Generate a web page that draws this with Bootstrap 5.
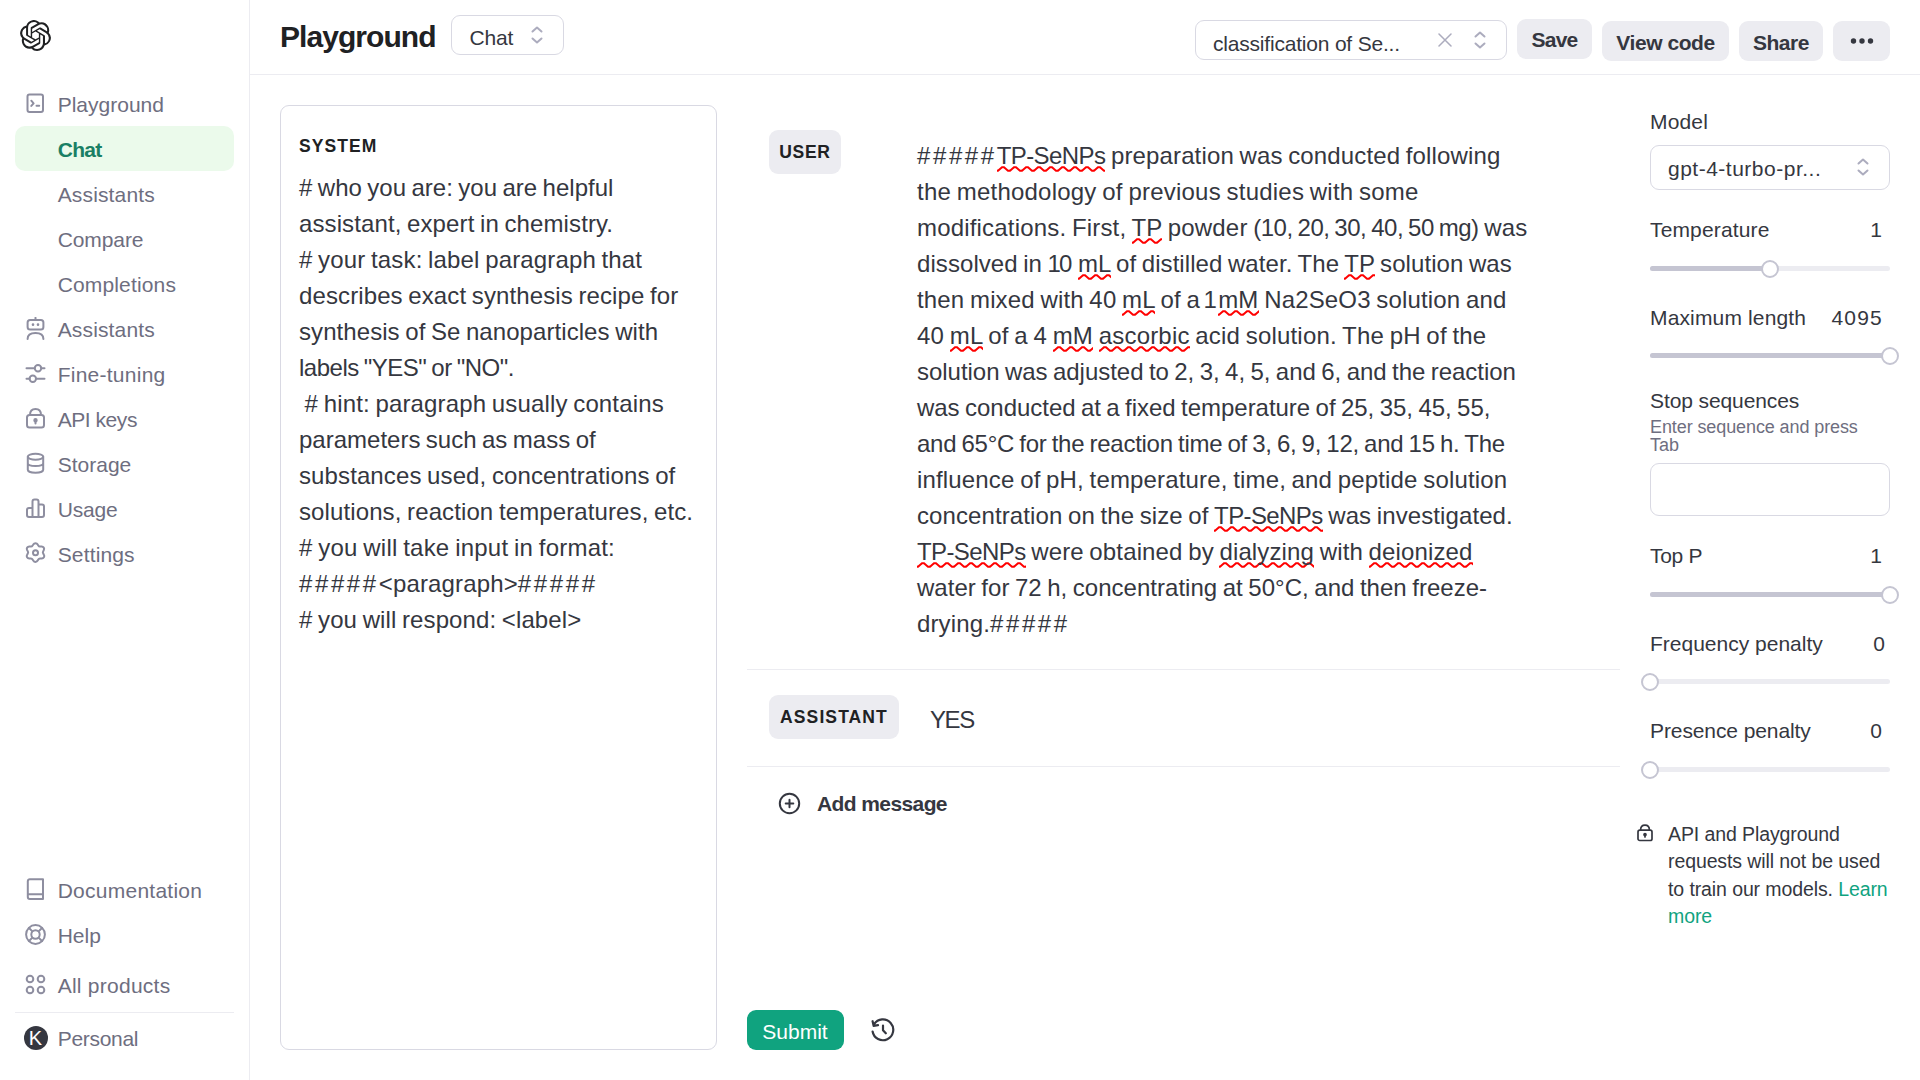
<!DOCTYPE html>
<html lang="en">
<head>
<meta charset="utf-8">
<title>Playground</title>
<link href="https://cdn.jsdelivr.net/npm/bootstrap@5.3.0/dist/css/bootstrap.min.css" rel="stylesheet">
<style>
body{font-family:"Liberation Sans",Arial,sans-serif;font-size:21px;line-height:30px;color:#353740;background:#fff;width:1920px;height:1080px;overflow:hidden}
svg{display:block;flex:none}
.ic{fill:none;stroke:currentColor;stroke-width:2;stroke-linecap:round;stroke-linejoin:round}
/* sidebar */
.side{width:250px;border-right:1px solid #ececf1;padding:20px 15px 20px;color:#6e6e80}
.brand{margin-left:5px}
.side-list{margin-top:30px}
.side-link{height:45px;padding:2px 0 0 10px;border-radius:10px;color:#6e6e80!important;text-decoration:none;white-space:nowrap}
.side-link svg{color:#8e8ea0;margin-top:-3px;margin-right:11.7px}
.side-link.sub{padding-left:42.7px}
.side-link.on{background:#ebfaeb;color:#1a7f64!important;font-weight:700;letter-spacing:-.7px}
.side-rule{height:1px;background:#ececf1;margin:5px 0 2px}
.products{margin-top:5px}
.avatar{width:24px;height:24px;margin:-2px 10.2px 0 -1.5px;background:#353740;color:#fff;font-size:20px;line-height:24px}
/* tracking steps */
.w1{letter-spacing:.15px}.w2{letter-spacing:.25px}.w4{letter-spacing:.5px}
.t1{letter-spacing:-.1px}.t2{letter-spacing:-.2px}.t3{letter-spacing:-.3px}.t5{letter-spacing:-.45px}
/* header */
.topbar{height:75px;border-bottom:1px solid #ececf1;padding:15px 30px 0 30px;white-space:nowrap}
.title{font-size:30px;line-height:36px;font-weight:700;color:#202123;letter-spacing:-.95px;width:171px;margin-top:4px}
.field{border:1px solid #d9d9e3;border-radius:9px;background:#fff}
.mode{width:113px;height:40px;padding:0 20px 0 17.5px}
.mode span{margin-top:5px}
.preset{width:312px;height:40px;margin-top:5px;padding:0 20px 0 17px}
.preset span{margin-top:7px}
.preset .clear{stroke-width:1.5;margin-right:22px}
.chev{color:#acacbe}
.btn-soft{height:40px;border:0;border-radius:9px;background:#ececf1;color:#353740;font-size:21px;line-height:30px;font-weight:700;padding:3px 0 0;margin:6px 0 0 10px;letter-spacing:-.45px}
.btn-soft.save{width:75px;margin-top:4px;padding-top:1px;letter-spacing:-.8px}
.btn-soft.code{width:127px}.btn-soft.share{width:84px}.btn-soft.more{width:57px;padding:0}
/* messages */
.main-area{padding:30px 30px 0}
.role{height:44px;border-radius:9px;background:#ececf1;color:#202123;font-size:17.5px;font-weight:700;letter-spacing:1.1px;line-height:45px;text-align:center}
.role.user{width:72px;letter-spacing:.7px}
.role.bot{width:130px}
.sys-card{width:437px;height:945px;padding:25px 18px}
.sys-label{font-size:17.5px;line-height:30px;font-weight:700;color:#202123;letter-spacing:1.05px;margin-bottom:9px}
.prose{font-size:24px;line-height:36px;white-space:pre;word-spacing:-1.2px}
.prose>span{display:block}
.hash{letter-spacing:2.6px}
.prose .np{letter-spacing:-.6px}
.prose .num{letter-spacing:-.5px}
.prose .one{letter-spacing:-2px}
.sp{padding-bottom:3px;background:url("data:image/svg+xml,%3Csvg xmlns='http://www.w3.org/2000/svg' width='12' height='6'%3E%3Cpath d='M-3 1.500L0 4.700L1 4.700L5 1.300L7 1.300L11 4.700L13 4.700' fill='none' stroke='red' stroke-width='2'/%3E%3C/svg%3E") repeat-x left bottom}
.sys-lines>:nth-child(2),.sys-lines>:nth-child(4),.sys-lines>:nth-child(9),.sys-lines>:nth-child(10),.sys-lines>:nth-child(13){letter-spacing:.11px}
.sys-lines>:nth-child(3),.sys-lines>:nth-child(7),.sys-lines>:nth-child(12){letter-spacing:.15px}
.sys-lines>:nth-child(5){letter-spacing:.07px}
.sys-lines>:nth-child(6){letter-spacing:-.49px}
.sys-lines>:nth-child(11){letter-spacing:.22px}
.user-lines{margin:8px 0 0 76px}
.user-lines>:nth-child(1),.user-lines>:nth-child(12),.user-lines>:nth-child(14){letter-spacing:.14px}
.user-lines>:nth-child(2){letter-spacing:.22px}
.user-lines>:nth-child(3){letter-spacing:.18px}
.user-lines>:nth-child(4){letter-spacing:.07px}
.user-lines>:nth-child(5){letter-spacing:.16px}
.user-lines>:nth-child(13){letter-spacing:.03px}
.user-lines>:nth-child(6){letter-spacing:.19px}
.user-lines>:nth-child(7),.user-lines>:nth-child(8){letter-spacing:-.03px}
.user-lines>:nth-child(9){letter-spacing:-.26px}
.user-lines>:nth-child(10){letter-spacing:.16px}
.user-lines>:nth-child(11){letter-spacing:.1px}
.bot-lines{margin:7px 0 0 31px;letter-spacing:-1.4px}
.mid{width:873px;height:945px;margin:0 30px}
.msg{border-bottom:1px solid #ececf1;padding:25px 0 0 22px}
.msg-user{height:565px}.msg-bot{height:97px}
.add-row{height:30px;margin:21px 0 0 31px;letter-spacing:-.6px}
.add-row svg{margin-right:16px}
.add-row span{padding-top:1px}
.btn-submit{width:97px;height:40px;border:0;border-radius:9px;background:#10a37f;color:#fff;font-size:21px;line-height:30px;padding:3px 1px 0 0}
.history{margin-left:27px;stroke-width:2.200}
/* settings */
.panel{width:240px;white-space:nowrap;padding-top:2px}
.model{height:45px;margin:8px 0 25px;padding:2px 20px 0 17px}
.model svg{margin-top:-3px}
.param{height:30px;padding-right:8px}
.param.freq{padding-right:5px}
.param .long{letter-spacing:1.2px;margin-right:-1px}
.track{height:5px;border-radius:3px;background:#ececf1;position:relative;margin:20px 0 32px}
.track.gap-lg{margin-top:21px}
.track.last-of-group{margin-bottom:28px}
.track i{display:block;height:5px;border-radius:3px;background:#c5c5d2}
.track b{position:absolute;top:-6px;width:18px;height:18px;margin-left:-9px;border:2px solid #c5c5d2;border-radius:50%;background:#fff}
.hint{font-size:18px;line-height:18px;color:#6e6e80;margin-top:2px}
.stop-input{height:53px;margin:9px 0 25px}
.note{font-size:19.5px;line-height:27.3px;margin:49px 0 0 -13px}
.note svg{margin:3px 15px 0 0;stroke-width:1.700}
.note .learn{color:#10a37f}
</style>
<script src="https://cdn.jsdelivr.net/npm/bootstrap@5.3.0/dist/js/bootstrap.bundle.min.js"></script>
</head>
<body class="d-flex">
<nav class="side d-flex flex-column flex-shrink-0 h-100">
  <svg class="brand" width="31" height="31" viewBox="0 0 24 24" fill="#202123"><path d="M22.2819 9.8211a5.9847 5.9847 0 0 0-.5157-4.9108 6.0462 6.0462 0 0 0-6.5098-2.9A6.0651 6.0651 0 0 0 4.9807 4.1818a5.9847 5.9847 0 0 0-3.9977 2.9 6.0462 6.0462 0 0 0 .7427 7.0966 5.98 5.98 0 0 0 .511 4.9107 6.051 6.051 0 0 0 6.5146 2.9001A5.9847 5.9847 0 0 0 13.2599 24a6.0557 6.0557 0 0 0 5.7718-4.2058 5.9894 5.9894 0 0 0 3.9977-2.9001 6.0557 6.0557 0 0 0-.7475-7.0729zm-9.022 12.6081a4.4755 4.4755 0 0 1-2.8764-1.0408l.1419-.0804 4.7783-2.7582a.7948.7948 0 0 0 .3927-.6813v-6.7369l2.02 1.1686a.071.071 0 0 1 .038.052v5.5826a4.504 4.504 0 0 1-4.4945 4.4944zm-9.6607-4.1254a4.4708 4.4708 0 0 1-.5346-3.0137l.142.0852 4.783 2.7582a.7712.7712 0 0 0 .7806 0l5.8428-3.3685v2.3324a.0804.0804 0 0 1-.0332.0615L9.74 19.9502a4.4992 4.4992 0 0 1-6.1408-1.6464zM2.3408 7.8956a4.485 4.485 0 0 1 2.3655-1.9728V11.6a.7664.7664 0 0 0 .3879.6765l5.8144 3.3543-2.0201 1.1685a.0757.0757 0 0 1-.071 0l-4.8303-2.7865A4.504 4.504 0 0 1 2.3408 7.872zm16.5963 3.8558L13.1038 8.364 15.1192 7.2a.0757.0757 0 0 1 .071 0l4.8303 2.7913a4.4944 4.4944 0 0 1-.6765 8.1042v-5.6772a.79.79 0 0 0-.407-.667zm2.0107-3.0231l-.142-.0852-4.7735-2.7818a.7759.7759 0 0 0-.7854 0L9.409 9.2297V6.8974a.0662.0662 0 0 1 .0284-.0615l4.8303-2.7866a4.4992 4.4992 0 0 1 6.6802 4.66zM8.3065 12.863l-2.02-1.1638a.0804.0804 0 0 1-.038-.0567V6.0742a4.4992 4.4992 0 0 1 7.3757-3.4537l-.142.0805L8.704 5.459a.7948.7948 0 0 0-.3927.6813zm1.0976-2.3654l2.602-1.4998 2.6069 1.4998v2.9994l-2.5974 1.4997-2.6067-1.4997Z"/></svg>
  <div class="side-list d-flex flex-column">
    <a class="side-link d-flex align-items-center"><svg class="ic" width="21" height="21" viewBox="0 0 21 21"><rect x="2.500" y="1.500" width="15.500" height="17.500" rx="2"/><path d="M6.300 7.700l2.300 2.600-2.300 2.600M11.500 12.800h2.700"/></svg><span>Playground</span></a>
    <a class="side-link sub on d-flex align-items-center"><span>Chat</span></a>
    <a class="side-link sub d-flex align-items-center"><span class="w1">Assistants</span></a>
    <a class="side-link sub d-flex align-items-center"><span class="t1">Compare</span></a>
    <a class="side-link sub d-flex align-items-center"><span class="w1">Completions</span></a>
    <a class="side-link d-flex align-items-center"><svg class="ic" width="21" height="23" viewBox="0 0 21 23"><path d="M10.500 .8v2M2.600 22c0-4.500 3.500-6 7.900-6s7.900 1.500 7.900 6"/><rect x="2.600" y="3" width="15.800" height="9.500" rx="2.500"/><path d="M8 7.500v.2M13 7.500v.2" stroke-width="2.600"/></svg><span class="w1">Assistants</span></a>
    <a class="side-link d-flex align-items-center"><svg class="ic" width="21" height="21" viewBox="0 0 21 21"><path d="M1.500 5.300h8M16.500 5.300h3M1.500 15.700h3M11.500 15.700h8"/><circle cx="13" cy="5.300" r="3.200"/><circle cx="7.800" cy="15.700" r="3.200"/></svg><span class="w2">Fine-tuning</span></a>
    <a class="side-link d-flex align-items-center"><svg class="ic" width="21" height="23" viewBox="0 0 21 23"><rect x="2" y="8" width="17" height="12.500" rx="2.500"/><path d="M5 8c0-3.500 2-6 5.500-6S16 4.500 16 8M10.500 14v2.500"/><circle cx="10.500" cy="13.200" r="1.200" fill="currentColor"/></svg><span class="t5">API keys</span></a>
    <a class="side-link d-flex align-items-center"><svg class="ic" width="21" height="23" viewBox="0 0 21 23"><ellipse cx="10.500" cy="4.700" rx="7.700" ry="3"/><path d="M2.800 4.700v13c0 1.700 3.400 3 7.700 3s7.700-1.300 7.700-3v-13M2.800 11.300c0 1.700 3.400 2.800 7.700 2.800s7.700-1.100 7.700-2.800"/></svg><span>Storage</span></a>
    <a class="side-link d-flex align-items-center"><svg class="ic" width="21" height="21" viewBox="0 0 21 21"><path d="M7.500 19V3.500a2 2 0 0 1 2-2h2a2 2 0 0 1 2 2V19M7.500 10H4a2 2 0 0 0-2 2v5a2 2 0 0 0 2 2h13a2 2 0 0 0 2-2V8.500a2 2 0 0 0-2-2h-3.500"/></svg><span class="t2">Usage</span></a>
    <a class="side-link d-flex align-items-center"><svg class="ic" width="21" height="23" viewBox="0 0 21 23"><path d="M8.300 2.500a2.500 2.500 0 0 1 4.400 0l.6 1a2 2 0 0 0 2 1l1.300-.1a2.500 2.500 0 0 1 2.200 3.700l-.6 1.200a2 2 0 0 0 0 2.200l.7 1.300a2.500 2.500 0 0 1-2.200 3.800l-1.400-.1a2 2 0 0 0-2 1l-.6 1.100a2.500 2.500 0 0 1-4.400 0l-.7-1.100a2 2 0 0 0-1.900-1l-1.400.1a2.500 2.500 0 0 1-2.200-3.800l.7-1.300a2 2 0 0 0 0-2.200l-.7-1.200a2.500 2.500 0 0 1 2.200-3.700l1.400.1a2 2 0 0 0 1.900-1z"/><circle cx="10.500" cy="10.800" r="2.500"/></svg><span class="w1">Settings</span></a>
  </div>
  <div class="mt-auto">
    <a class="side-link d-flex align-items-center"><svg class="ic" width="21" height="23" viewBox="0 0 21 23"><path d="M18 21H4.800a2 2 0 0 1-2-2V3.200a2 2 0 0 1 2-2H18zM3.500 16.300H18"/></svg><span class="w2">Documentation</span></a>
    <a class="side-link d-flex align-items-center"><svg class="ic" width="21" height="21" viewBox="0 0 21 21"><circle cx="10.500" cy="10.500" r="9.400"/><circle cx="10.500" cy="10.500" r="4.200"/><path d="M4 4l3.400 3.400M17 4l-3.400 3.400M4 17l3.400-3.400M17 17l-3.400-3.400"/></svg><span>Help</span></a>
    <a class="side-link products d-flex align-items-center"><svg class="ic" width="21" height="21" viewBox="0 0 21 21"><circle cx="5" cy="5" r="3.300"/><circle cx="16" cy="5" r="3.300"/><circle cx="5" cy="16" r="3.300"/><circle cx="16" cy="16" r="3.300"/></svg><span class="w2">All products</span></a>
    <div class="side-rule"></div>
    <a class="side-link d-flex align-items-center"><span class="avatar rounded-circle text-center">K</span><span class="t3">Personal</span></a>
  </div>
</nav>
<div class="flex-grow-1">
  <header class="topbar d-flex align-items-start">
    <div class="title">Playground</div>
    <div class="field mode d-flex align-items-center"><span class="t2">Chat</span><svg class="ic chev ms-auto" width="12" height="18" viewBox="0 0 12 18"><path d="M1.500 5.500L6 1.500l4.500 4M1.500 12.500l4.500 4 4.500-4"/></svg></div>
    <div class="field preset d-flex align-items-center ms-auto"><span class="t2">classification of Se...</span><svg class="ic chev clear ms-auto" width="14" height="14" viewBox="0 0 14 14"><path d="M1 1l12 12M13 1L1 13"/></svg><svg class="ic chev" width="12" height="18" viewBox="0 0 12 18"><path d="M1.500 5.500L6 1.500l4.500 4M1.500 12.500l4.500 4 4.500-4"/></svg></div>
    <button class="btn-soft save">Save</button>
    <button class="btn-soft code">View code</button>
    <button class="btn-soft share">Share</button>
    <button class="btn-soft more d-flex align-items-center justify-content-center"><svg width="24" height="6" viewBox="0 0 24 6" fill="#353740"><circle cx="3.500" cy="3" r="2.700"/><circle cx="12" cy="3" r="2.700"/><circle cx="20.500" cy="3" r="2.700"/></svg></button>
  </header>
  <main class="main-area d-flex">
    <section class="field sys-card">
      <div class="sys-label">SYSTEM</div>
      <div class="prose sys-lines"><span># who you are: you are helpful</span><span>assistant, expert in chemistry.</span><span># your task: label paragraph that</span><span>describes exact synthesis recipe for</span><span>synthesis of Se nanoparticles with</span><span>labels "YES" or "NO".</span><span> # hint: paragraph usually contains</span><span>parameters such as mass of</span><span>substances used, concentrations of</span><span>solutions, reaction temperatures, etc.</span><span># you will take input in format:</span><span><span class="hash">#####</span>&lt;paragraph&gt;<span class="hash">#####</span></span><span># you will respond: &lt;label&gt;</span></div>
    </section>
    <section class="mid d-flex flex-column">
      <div class="msg msg-user d-flex">
        <div class="role user">USER</div>
        <div class="prose user-lines"><span><span class="hash">#####</span><span class="sp np">TP-SeNPs</span> preparation was conducted following</span><span>the methodology of previous studies with some</span><span>modifications. First, <span class="sp">TP</span> powder <span class="num">(10, 20, 30, 40, 50 mg)</span> was</span><span>dissolved in <span class="one">1</span>0 <span class="sp">mL</span> of distilled water. The <span class="sp">TP</span> solution was</span><span>then mixed with 40 <span class="sp">mL</span> of a<span class="one"> 1 </span><span class="sp">mM</span> Na2SeO3 solution and</span><span>40 <span class="sp">mL</span> of a 4 <span class="sp">mM</span> <span class="sp">ascorbic</span> acid solution. The pH of the</span><span>solution was adjusted to 2, 3, 4, 5, and 6, and the reaction</span><span>was conducted at a fixed temperature of 25, 35, 45, 55,</span><span>and 65°C for the reaction time of 3, 6, 9, 12, and 15 h. The</span><span>influence of pH, temperature, time, and peptide solution</span><span>concentration on the size of <span class="sp np">TP-SeNPs</span> was investigated.</span><span><span class="sp np">TP-SeNPs</span> were obtained by <span class="sp">dialyzing</span> with <span class="sp">deionized</span></span><span>water for 72 h, concentrating at 50°C, and then freeze-</span><span>drying.<span class="hash">#####</span></span></div>
      </div>
      <div class="msg msg-bot d-flex">
        <div class="role bot">ASSISTANT</div>
        <div class="prose bot-lines"><span>YES</span></div>
      </div>
      <div class="add-row d-flex align-items-center fw-bold"><svg class="ic" width="23" height="23" viewBox="0 0 23 23"><circle cx="11.500" cy="11.500" r="9.700"/><path d="M11.500 7.700v7.600M7.700 11.500h7.600"/></svg><span>Add message</span></div>
      <div class="mt-auto d-flex align-items-center"><button class="btn-submit">Submit</button><svg class="ic history" width="24" height="24" viewBox="0 0 24 24"><path d="M1.600 13.500a10.400 10.400 0 1 0 1.500-7.300M1.600 3.200l1 4.600 4.400-.7M12 7.500v4.800l2.800 3"/></svg></div>
    </section>
    <aside class="panel">
      <div class="w1">Model</div>
      <div class="field model d-flex align-items-center"><span class="w4">gpt-4-turbo-pr...</span><svg class="ic chev ms-auto" width="12" height="18" viewBox="0 0 12 18"><path d="M1.500 5.500L6 1.500l4.500 4M1.500 12.500l4.500 4 4.500-4"/></svg></div>
      <div class="param d-flex justify-content-between"><span class="w1">Temperature</span><span>1</span></div>
      <div class="track gap-lg"><i style="width:50%"></i><b style="left:50%"></b></div>
      <div class="param d-flex justify-content-between"><span class="w1">Maximum length</span><span class="long">4095</span></div>
      <div class="track last-of-group"><i style="width:100%"></i><b style="left:100%"></b></div>
      <div class="t1">Stop sequences</div>
      <div class="hint"><span class="t1">Enter sequence and press</span><br>Tab</div>
      <div class="field stop-input"></div>
      <div class="param d-flex justify-content-between"><span class="t3">Top P</span><span>1</span></div>
      <div class="track gap-lg"><i style="width:100%"></i><b style="left:100%"></b></div>
      <div class="param freq d-flex justify-content-between"><span>Frequency penalty</span><span>0</span></div>
      <div class="track"><b style="left:0"></b></div>
      <div class="param d-flex justify-content-between"><span class="t1">Presence penalty</span><span>0</span></div>
      <div class="track gap-lg"><b style="left:0"></b></div>
      <div class="note t1 d-flex"><svg class="ic" width="16" height="18" viewBox="0 0 16 18"><rect x="1" y="6.200" width="14" height="10.300" rx="1.800"/><path d="M3.600 6.200C3.600 3 5 1.200 8 1.200s4.400 1.800 4.400 5M8 11v2"/><circle cx="8" cy="10.500" r="1" fill="currentColor"/></svg><div>API and Playground<br>requests will not be used<br>to train our models. <span class="learn">Learn<br>more</span></div></div>
    </aside>
  </main>
</div>
</body>
</html>
